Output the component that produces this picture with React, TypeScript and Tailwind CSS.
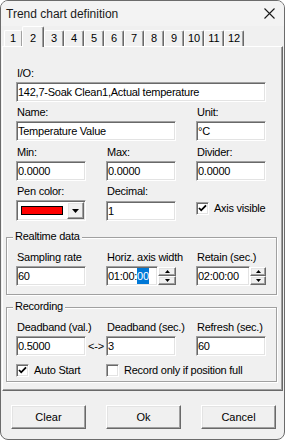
import React from "react";

const sunken =
  "bg-white border border-t-[#a0a0a0] border-l-[#a0a0a0] border-r-white border-b-white shadow-[inset_1px_1px_0_#696969,inset_-1px_-1px_0_#e3e3e3]";
const raised =
  "bg-[#f0f0f0] border border-t-white border-l-white border-r-[#696969] border-b-[#696969] shadow-[inset_-1px_-1px_0_#a0a0a0,inset_1px_1px_0_#e3e3e3]";

function Label({ text }: { text: string }) {
  return <div className="h-[13px] leading-[13px] pl-[1px] whitespace-nowrap">{text}</div>;
}

function Field({ label, value, w = "w-[70px]" }: { label: string; value: string; w?: string }) {
  return (
    <div className={`flex flex-col ${w}`}>
      <Label text={label} />
      <div className={`${sunken} mt-[2px] h-[20px] flex items-center pl-[1px] whitespace-nowrap`}>{value}</div>
    </div>
  );
}

function Arrow({ up }: { up?: boolean }) {
  return (
    <svg width="5" height="3" viewBox="0 0 5 3">
      <path d={up ? "M2.5 0 L5 3 L0 3 Z" : "M0 0 L5 0 L2.5 3 Z"} fill="#000" />
    </svg>
  );
}

function Spin({ label, editW, spinW, children }: { label: string; editW: string; spinW: string; children: React.ReactNode }) {
  return (
    <div className="flex flex-col w-[70px]">
      <Label text={label} />
      <div className="mt-[2px] h-[20px] flex">
        <div className={`${sunken} ${editW} h-[20px] flex items-center pl-[1px] whitespace-nowrap`}>{children}</div>
        <div className={`${spinW} flex flex-col justify-center`}>
          <div className={`${raised} h-[9px] flex items-center justify-center`}>
            <Arrow up />
          </div>
          <div className={`${raised} h-[9px] flex items-center justify-center`}>
            <Arrow />
          </div>
        </div>
      </div>
    </div>
  );
}

function Check({ checked, label }: { checked?: boolean; label: string }) {
  return (
    <div className="flex items-center gap-[5px] h-[13px] whitespace-nowrap">
      <div className={`${sunken} w-[13px] h-[13px] flex items-center justify-center`}>
        {checked && (
          <svg width="9" height="9" viewBox="0 0 9 9">
            <path d="M1 4 L3.2 6.3 L8 1.3" stroke="#000" strokeWidth="1.8" fill="none" />
          </svg>
        )}
      </div>
      <span className="leading-[13px]">{label}</span>
    </div>
  );
}

function Group({ title, children, className }: { title: string; children: React.ReactNode; className: string }) {
  return (
    <div
      className={`relative ml-[3px] w-[271px] border border-[#a0a0a0] shadow-[inset_1px_1px_0_#fff,1px_1px_0_#fff] pl-[9px] pt-[13px] ${className}`}
    >
      <span className="absolute left-[6px] -top-[8px] px-[2px] bg-[#f0f0f0] leading-[13px] whitespace-nowrap">{title}</span>
      {children}
    </div>
  );
}

function Button({ children }: { children: React.ReactNode }) {
  return <div className={`${raised} w-[75px] h-[24px] flex items-center justify-center`}>{children}</div>;
}

export default function App() {
  const tabs = ["3", "4", "5", "6", "7", "8", "9", "10", "11", "12"];
  return (
    <div
      className="w-[285px] h-[440px] bg-[#f0f0f0] border border-[#6b6b6b] rounded-[8px] overflow-hidden flex flex-col text-black text-[11px] tracking-[-0.25px]"
      style={{ fontFamily: '"Liberation Sans", Arial, sans-serif' }}
    >
      {/* title bar */}
      <div className="h-[25px] bg-[#f3f3f3] flex items-center justify-between pl-[5px] pr-[9px] tracking-normal">
        <span className="text-[12px] text-[#1a1a1a]">Trend chart definition</span>
        <svg width="11" height="11" viewBox="0 0 11 11">
          <path d="M0.5 0.5 L10.5 10.5 M10.5 0.5 L0.5 10.5" stroke="#1a1a1a" strokeWidth="1.1" />
        </svg>
      </div>

      {/* tabs */}
      <div className="h-[20px] flex items-end pl-[3px] relative z-10 tracking-normal">
        <div className="w-[18px] h-[16px] border-l border-t border-white border-r border-r-[#a0a0a0] rounded-t-[2px] flex items-center justify-center">
          1
        </div>
        <div className="w-[22px] h-[21px] -mb-[1px] bg-[#f0f0f0] border-l border-t border-white border-r border-r-[#696969] shadow-[inset_-1px_0_0_#a0a0a0] rounded-t-[2px] flex items-start justify-center pt-[3px]">
          2
        </div>
        {tabs.map((t) => (
          <div
            key={t}
            className="w-[20px] h-[16px] border-l border-t border-white border-r border-r-[#696969] shadow-[inset_-1px_0_0_#a0a0a0] rounded-t-[2px] flex items-center justify-center"
          >
            {t}
          </div>
        ))}
      </div>

      {/* panel */}
      <div className="ml-[1px] w-[281px] border border-t-white border-l-white border-r-[#696969] border-b-[#696969] shadow-[inset_-1px_-1px_0_#a0a0a0] pb-[8px]">
        <div className="flex flex-col pl-[13px] pt-[20px]">
          <Field label="I/O:" value="142,7-Soak Clean1,Actual temperature" w="w-[250px]" />
          <div className="flex gap-[20px] mt-[4px]">
            <Field label="Name:" value="Temperature Value" w="w-[160px]" />
            <Field label="Unit:" value="°C" />
          </div>
          <div className="flex gap-[20px] mt-[5px]">
            <Field label="Min:" value="0.0000" />
            <Field label="Max:" value="0.0000" />
            <Field label="Divider:" value="0.0000" />
          </div>
          <div className="flex gap-[20px] mt-[4px]">
            <div className="flex flex-col w-[70px]">
              <Label text="Pen color:" />
              <div className={`${sunken} mt-[2px] h-[21px] flex items-center justify-between pl-[4px] pr-[1px]`}>
                <div className="w-[42px] h-[9px] bg-[#ff0000] border border-black" />
                <div className={`${raised} w-[17px] h-[17px] flex items-center justify-center`}>
                  <svg width="7" height="4" viewBox="0 0 7 4">
                    <path d="M0 0 L7 0 L3.5 4 Z" fill="#000" />
                  </svg>
                </div>
              </div>
            </div>
            <div className="flex flex-col w-[70px]">
              <Label text="Decimal:" />
              <div className={`${sunken} mt-[3px] h-[20px] flex items-center pl-[1px]`}>1</div>
            </div>
            <div className="self-end mb-[6px]">
              <Check checked label="Axis visible" />
            </div>
          </div>
        </div>

        <Group title="Realtime data" className="mt-[16px] pb-[8px]">
          <div className="flex gap-[20px]">
            <Field label="Sampling rate" value="60" />
            <Spin label="Horiz. axis width" editW="w-[52px]" spinW="w-[18px]">
              <span>01:00:</span>
              <span className="bg-[#0078d7] text-white">00</span>
            </Spin>
            <Spin label="Retain (sec.)" editW="w-[54px]" spinW="w-[16px]">
              02:00:00
            </Spin>
          </div>
        </Group>

        <Group title="Recording" className="mt-[12px] pb-[4px]">
          <div className="flex">
            <Field label="Deadband (val.)" value="0.5000" />
            <div className="w-[20px] flex flex-col">
              <div className="h-[13px]" />
              <div className="mt-[2px] h-[20px] flex items-center justify-center">{"<->"}</div>
            </div>
            <Field label="Deadband (sec.)" value="3" />
            <div className="w-[20px]" />
            <Field label="Refresh (sec.)" value="60" />
          </div>
          <div className="flex mt-[8px]">
            <div className="w-[90px]">
              <Check checked label="Auto Start" />
            </div>
            <Check label="Record only if position full" />
          </div>
        </Group>
      </div>

      {/* buttons */}
      <div className="flex gap-[20px] pl-[10px] mt-[14px] tracking-normal">
        <Button>Clear</Button>
        <Button>Ok</Button>
        <Button>Cancel</Button>
      </div>
    </div>
  );
}
